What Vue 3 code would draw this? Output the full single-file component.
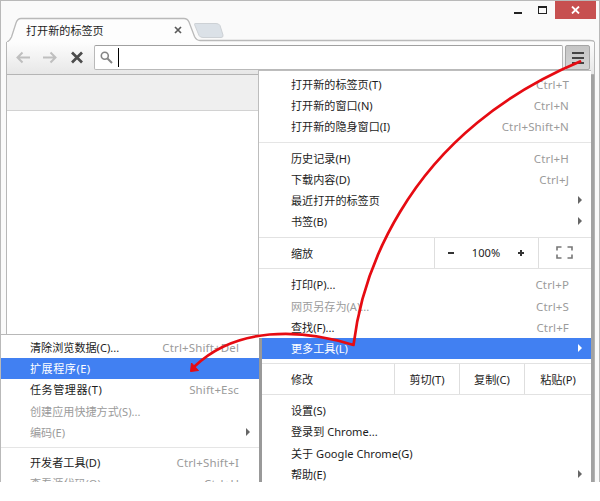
<script setup>
const groupA = [
  { t: '打开新的标签页(T)', k: 'Ctrl+T' },
  { t: '打开新的窗口(N)', k: 'Ctrl+N' },
  { t: '打开新的隐身窗口(I)', k: 'Ctrl+Shift+N' },
]
const groupB = [
  { t: '历史记录(H)', k: 'Ctrl+H' },
  { t: '下载内容(D)', k: 'Ctrl+J' },
  { t: '最近打开的标签页', sub: true },
  { t: '书签(B)', sub: true },
]
const groupC = [
  { t: '打印(P)...', k: 'Ctrl+P' },
  { t: '网页另存为(A)...', k: 'Ctrl+S', off: true },
  { t: '查找(F)...', k: 'Ctrl+F' },
  { t: '更多工具(L)', sub: true, on: true },
]
const groupD = [
  { t: '设置(S)' },
  { t: '登录到 Chrome...' },
  { t: '关于 Google Chrome(G)' },
  { t: '帮助(E)', sub: true },
]
const toolsA = [
  { t: '清除浏览数据(C)...', k: 'Ctrl+Shift+Del' },
  { t: '扩展程序(E)', on: true, wide: true },
  { t: '任务管理器(T)', k: 'Shift+Esc', wide: true },
  { t: '创建应用快捷方式(S)...', off: true },
  { t: '编码(E)', off: true, sub: true },
]
const toolsB = [
  { t: '开发者工具(D)', k: 'Ctrl+Shift+I' },
  { t: '查看源代码(O)', k: 'Ctrl+U', off: true },
]
const blocks = [groupA, groupB, groupC, groupD]
</script>

<template>
  <div class="screen">
    <header class="titlebar">
      <svg class="tabshape" width="600" height="42" viewBox="0 0 600 42">
        <path d="M194.500 24.500Q194 23.500 196 23.500H216Q219 23.500 220 25.500L223 35Q223.500 37.500 221 37.500H203Q200 37.500 199 35.500Z" fill="#dbe1e7" stroke="#cdd1d5" />
        <path d="M7 42Q10 40.500 11.500 37L16 23Q17.500 18.500 21 18.500H184Q187.500 18.500 189 22L194.500 36.500Q196.500 40.500 200 40.500H590Q594 40.500 594 42Z" fill="#fdfdfd" />
        <path d="M7 42Q10 40.500 11.500 37L16 23Q17.500 18.500 21 18.500H184Q187.500 18.500 189 22L194.500 36.500Q196.500 40.500 200 40.500H590Q594 40.500 594 42" fill="none" stroke="#b9b9b9" stroke-width="1.300" />
      </svg>
      <span class="tabname">打开新的标签页</span>
      <svg class="tabx" width="8" height="8" viewBox="0 0 8 8"><path d="M1 1l6 6M7 1l-6 6" stroke="#5b5b5b" stroke-width="1.700" /></svg>
      <div class="controls">
        <i class="min"></i>
        <i class="max"></i>
        <b class="close"><svg width="9" height="8" viewBox="0 0 9 8"><path d="M1 .5l7 7M8 .5l-7 7" stroke="#fff" stroke-width="1.800" /></svg></b>
      </div>
    </header>
    <div class="frame">
      <div class="toolbar">
        <svg class="nav" width="82" height="32" viewBox="0 0 82 32">
          <g fill="none" stroke="#bfbfbf" stroke-width="2">
            <path d="M24 15.500H12M16.500 10.500l-5 5 5 5" />
            <path d="M37 15.500H49M44.500 10.500l5 5-5 5" />
          </g>
          <path d="M66 10.500l10 10M76 10.500l-10 10" stroke="#4c4c4c" stroke-width="2.700" />
        </svg>
        <div class="omnibox">
          <svg width="13" height="13" viewBox="0 0 13 13"><circle cx="4.800" cy="4.800" r="3.500" fill="none" stroke="#858585" stroke-width="1.600" /><path d="M7.500 7.500L12 12" stroke="#858585" stroke-width="2" /></svg>
          <i class="caret"></i>
        </div>
        <div class="burger"><i></i><i></i><i></i></div>
      </div>
      <div class="bookmarks"></div>
      <div class="page"></div>
    </div>

    <div class="menu main">
      <template v-for="(rows, n) in blocks" :key="n">
        <div v-if="n === 1" class="sep"></div>
        <div v-if="n === 2" class="strip">
          <span class="lead">缩放</span>
          <div class="zoom"><i class="minus"></i><span>100%</span><i class="plus"></i></div>
          <div class="full">
            <svg width="17" height="13" viewBox="0 0 17 13"><path d="M1 4.500V1h4.500M11.500 1H16v3.500M16 8.500V12h-4.500M5.500 12H1V8.500" fill="none" stroke="#777" stroke-width="1.600" /></svg>
          </div>
        </div>
        <div v-if="n === 3" class="strip edit">
          <span class="lead">修改</span>
          <span class="cell">剪切(T)</span><span class="cell">复制(C)</span><span class="cell last">粘贴(P)</span>
        </div>
        <div class="rows" :class="'g' + n">
          <div v-for="r in rows" :key="r.t" class="row" :class="{ on: r.on, off: r.off }">
            <span>{{ r.t }}</span>
            <span v-if="r.k" class="key">{{ r.k }}</span>
            <i v-if="r.sub" class="arrow"></i>
          </div>
        </div>
      </template>
    </div>

    <div class="menu tools">
      <div class="rows">
        <div v-for="r in toolsA" :key="r.t" class="row" :class="{ on: r.on, off: r.off, wide: r.wide }">
          <span>{{ r.t }}</span>
          <span v-if="r.k" class="key">{{ r.k }}</span>
          <i v-if="r.sub" class="arrow"></i>
        </div>
      </div>
      <div class="sep"></div>
      <div class="rows">
        <div v-for="r in toolsB" :key="r.t" class="row" :class="{ off: r.off }">
          <span>{{ r.t }}</span>
          <span class="key">{{ r.k }}</span>
        </div>
      </div>
    </div>

    <svg class="pointer" width="600" height="482" viewBox="0 0 600 482">
      <path d="M580 61.500C505 93 441 143 400 212C374 255 359 300 353.500 345C300 328 236 327 195 366" fill="none" stroke="#e60b12" stroke-width="2.700" stroke-linejoin="round" stroke-linecap="round" />
      <path d="M190.500 371.500L191.500 363L198.500 370.500Z" fill="#e60b12" stroke="#e60b12" stroke-linejoin="round" />
    </svg>
  </div>
</template>

<style>
body { background: #fff; }
</style>

<style scoped>
.screen {
  position: relative;
  width: 600px;
  height: 482px;
  overflow: hidden;
  box-sizing: border-box;
  background: #fafafa;
  border: 1px solid #b9b9b9;
  border-bottom: 0;
  font: 11.100px/21px "Noto Sans", "Noto Sans CJK SC", sans-serif;
  color: #1c1c1c;
}
.titlebar { position: relative; height: 41px; display: flex; align-items: flex-start; }
.tabshape { position: absolute; left: -1px; top: -1px; }
.tabname { position: relative; margin: 19px 0 0 25px; width: 148px; }
.tabx { position: relative; margin-top: 25px; }
.controls { display: flex; margin-left: auto; margin-right: 3px; }
.min { width: 8px; height: 2px; background: #222; margin: 11px 16px 0 0; }
.max { width: 7px; height: 5px; border: 1px solid #222; border-top-width: 2px; margin: 5px 8px 0 0; }
.close { width: 41px; height: 18px; background: #c75050; display: flex; align-items: center; justify-content: center; }
.frame { margin: 0 4px 0 5px; height: 440px; border: solid #b7b7b7; border-width: 0 1px; display: flex; flex-direction: column; }
.toolbar { height: 32px; display: flex; align-items: flex-start; background: linear-gradient(#fdfdfd, #e7e7e7); border-bottom: 1px solid #b5b5b5; }
.nav { flex: none; margin-left: -1px; }
.omnibox { width: 469px; height: 25px; box-sizing: border-box; margin: 3px 2px 0 6px; border: 1px solid #b9b9b9; border-top-color: #a0a0a0; border-radius: 2px; background: #fff; display: flex; align-items: center; padding-left: 5px; }
.caret { width: 1px; height: 19px; background: #000; margin-left: 5px; }
.burger { width: 25px; height: 25px; box-sizing: border-box; margin-top: 3px; border: 1px solid #a5a5a5; border-radius: 2px; background: linear-gradient(#c5c5c5, #d4d4d4); display: flex; flex-direction: column; align-items: center; justify-content: center; gap: 3px; }
.burger i { width: 12px; height: 2px; background: #444; }
.bookmarks { height: 35px; background: #efefef; border-bottom: 1px solid #d2d2d2; }
.page { flex: 1; background: #fff; }
.menu { position: absolute; background: #fff; box-sizing: border-box; }
.main { left: 257px; top: 69px; width: 333px; height: 430px; border: solid #bdbdbd; border-width: 1px 0 0 1px; padding-top: 3px; box-shadow: 3px 5px 1px #a2a2a2; }
.tools { left: -1px; top: 333px; width: 259px; height: 165px; border-top: 1px solid #b8b8b8; padding-top: 2px; box-shadow: 3px 4px 0 #999; }
.row { height: 21.200px; display: flex; align-items: center; white-space: nowrap; padding: 0 7px 0 32px; }
.main .rows { padding-bottom: 4px; }
.main .g1 { padding-bottom: 5px; }
.row > span:first-child { flex: 1; }
.key { color: #9b9b9b; font-size: 11.500px; letter-spacing: .15px; margin-right: 15px; }
.off { color: #9b9b9b; }
.on { background: #4180f2; color: #fff; }
.wide { letter-spacing: .5px; }
.arrow { border: solid transparent; border-width: 4px 0 4px 4px; border-left-color: #666; margin: 0 2px 1px 0; }
.on .arrow { border-left-color: #fff; }
.sep { height: 1px; background: #e5e5e5; margin: 0 0 5px; }
.strip { display: flex; height: 32px; box-sizing: border-box; border: solid #e2e2e2; border-width: 1px 0; margin-bottom: 5px; line-height: 32px; }
.lead { width: 143px; padding-left: 32px; }
.zoom { width: 105px; box-sizing: border-box; border: solid #dedede; border-width: 0 1px; display: flex; align-items: center; justify-content: center; gap: 17.500px; padding-right: 1px; }
.minus { width: 6px; height: 2px; background: #333; }
.plus { width: 6px; height: 6px; background: linear-gradient(#333, #333) center / 6px 2px no-repeat, linear-gradient(#333, #333) center / 2px 6px no-repeat; }
.full { flex: 1; display: flex; align-items: center; justify-content: center; padding: 0 2px 2px 0; }
.edit .lead { width: 103px; }
.cell { width: 65px; box-sizing: border-box; border-left: 1px solid #dedede; text-align: center; }
.last { flex: 1; }
.tools .row { padding-left: 30px; }
.tools .key { margin-right: 13px; }
.tools .sep { margin: 4px 0 4px; }
.pointer { position: absolute; left: -1px; top: -1px; }
</style>
